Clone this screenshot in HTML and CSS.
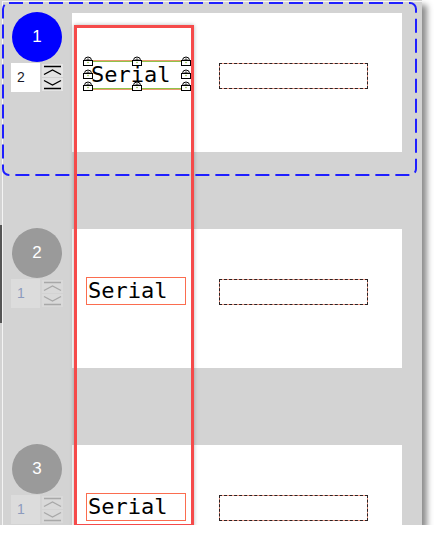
FILE: index.html
```html
<!DOCTYPE html>
<html lang="en">
<head>
    <meta charset="UTF-8">
    <title>Serial layout</title>
    <link rel="stylesheet" href="styles.css">
</head>
<body>
    <svg width="0" height="0" class="defs">
        <symbol id="lock" viewBox="0 0 12 12">
            <path d="M2.5 6.5 A3.5 3.5 0 0 1 9.5 6.5" fill="#fff" stroke="#000" stroke-width="1"/>
            <path d="M4.5 6.5 A1.5 1.5 0 0 1 7.5 6.5" fill="none" stroke="#000" stroke-width="0.8"/>
            <rect x="1.5" y="6.5" width="9" height="5" fill="#fff" stroke="#000" stroke-width="1"/>
            <circle cx="6" cy="8.5" r="0.8" fill="#8bbd3c"/>
        </symbol>
    </svg>

    <div class="frame">
        <div class="panel">
            <div class="inner">

                <div class="row">
                    <div class="side">
                        <div class="badge active">1</div>
                        <div class="spinner">
                            <div class="spin-value">2</div>
                            <div class="spin-buttons">
                                <div class="spin-btn">
                                    <svg width="21" height="13"><path d="M2 2.5 H19 M2 10.5 L10.5 6 L19 10.5" fill="none" stroke="currentColor" stroke-width="1.4"/></svg>
                                </div>
                                <div class="spin-btn">
                                    <svg width="21" height="13"><path d="M2 2.5 L10.5 7 L19 2.5 M2 10.5 H19" fill="none" stroke="currentColor" stroke-width="1.4"/></svg>
                                </div>
                            </div>
                        </div>
                    </div>
                    <div class="card">
                        <div class="field selected">
                            <span>Serial</span>
                            <svg class="handle h-tl"><use href="#lock"/></svg>
                            <svg class="handle h-tc"><use href="#lock"/></svg>
                            <svg class="handle h-tr"><use href="#lock"/></svg>
                            <svg class="handle h-ml"><use href="#lock"/></svg>
                            <svg class="handle h-mr"><use href="#lock"/></svg>
                            <svg class="handle h-bl"><use href="#lock"/></svg>
                            <svg class="handle h-bc"><use href="#lock"/></svg>
                            <svg class="handle h-br"><use href="#lock"/></svg>
                        </div>
                        <div class="slot"></div>
                    </div>
                </div>

                <div class="row">
                    <div class="side">
                        <div class="badge">2</div>
                        <div class="spinner disabled">
                            <div class="spin-value">1</div>
                            <div class="spin-buttons">
                                <div class="spin-btn">
                                    <svg width="21" height="13"><path d="M2 2.5 H19 M2 10.5 L10.5 6 L19 10.5" fill="none" stroke="currentColor" stroke-width="1.4"/></svg>
                                </div>
                                <div class="spin-btn">
                                    <svg width="21" height="13"><path d="M2 2.5 L10.5 7 L19 2.5 M2 10.5 H19" fill="none" stroke="currentColor" stroke-width="1.4"/></svg>
                                </div>
                            </div>
                        </div>
                    </div>
                    <div class="card">
                        <div class="field"><span>Serial</span></div>
                        <div class="slot"></div>
                    </div>
                </div>

                <div class="row">
                    <div class="side">
                        <div class="badge">3</div>
                        <div class="spinner disabled">
                            <div class="spin-value">1</div>
                            <div class="spin-buttons">
                                <div class="spin-btn">
                                    <svg width="21" height="13"><path d="M2 2.5 H19 M2 10.5 L10.5 6 L19 10.5" fill="none" stroke="currentColor" stroke-width="1.4"/></svg>
                                </div>
                                <div class="spin-btn">
                                    <svg width="21" height="13"><path d="M2 2.5 L10.5 7 L19 2.5 M2 10.5 H19" fill="none" stroke="currentColor" stroke-width="1.4"/></svg>
                                </div>
                            </div>
                        </div>
                    </div>
                    <div class="card">
                        <div class="field"><span>Serial</span></div>
                        <div class="slot"></div>
                    </div>
                </div>

            </div>
        </div>

        <!-- overlays -->
        <svg class="row-select" width="416" height="174">
            <rect x="1" y="1" width="413" height="172" rx="6" ry="6" fill="none" stroke="#1f1fff" stroke-width="2" stroke-dasharray="14 6"/>
        </svg>
        <div class="column-mark"></div>
        <div class="scroll-mark"></div>
    </div>
</body>
</html>
```

FILE: styles.css
```css
body {
    margin: 0;
    background-color: #ffffff;
    font-family: "Liberation Sans", Arial, sans-serif;
}

.defs {
    position: absolute;
}

.frame {
    position: relative;
    width: 422px;
    height: 525px;
}

.panel {
    width: 422px;
    height: 525px;
    background-color: #d3d3d3;
    box-shadow: 5px 5px 6px rgba(0, 0, 0, 0.45);
    overflow: hidden;
    box-sizing: border-box;
    padding: 1px 0 0 2px;
}

.inner {
    height: 100%;
    border-left: 1px solid #f4f4f4;
    border-top: 1px solid #f4f4f4;
    padding-top: 11px;
    box-sizing: border-box;
}

.row {
    display: flex;
    margin-bottom: 77px;
}

.side {
    width: 61px;
    flex-shrink: 0;
    padding-left: 8px;
    margin-top: -1px;
}

.badge {
    width: 50px;
    height: 50px;
    border-radius: 50%;
    background-color: #9a9a9a;
    color: #ffffff;
    font-size: 17px;
    display: flex;
    align-items: center;
    justify-content: center;
    margin-left: 1px;
}

.badge.active {
    background-color: #0000ff;
}

.spinner {
    display: flex;
    margin-top: 1px;
    height: 29px;
}

.spin-value {
    width: 23px;
    height: 29px;
    flex-shrink: 0;
    padding-left: 6px;
    background-color: #ffffff;
    font-size: 14px;
    line-height: 29px;
    color: #1a1a2a;
}

.spin-buttons {
    display: flex;
    flex-direction: column;
    justify-content: center;
    gap: 1px;
    margin-left: 2px;
    flex-shrink: 0;
}

.spin-btn {
    width: 21px;
    height: 13px;
    background-color: #e4e4e4;
    color: #000000;
}

.spin-btn svg {
    display: block;
}

.spinner.disabled .spin-value {
    background-color: #dcdcdc;
    color: #8d9bbd;
}

.spinner.disabled .spin-btn {
    background-color: #d9d9d9;
    color: #a8a8a8;
}

.card {
    width: 330px;
    height: 139px;
    flex-shrink: 0;
    background-color: #ffffff;
    display: flex;
    align-items: flex-start;
    padding: 48px 0 0 14px;
    box-sizing: border-box;
}

.field {
    position: relative;
    width: 100px;
    height: 28px;
    box-sizing: border-box;
    border: 1px solid #fb6d4f;
    font-family: "DejaVu Sans Mono", "Liberation Mono", monospace;
    font-size: 22px;
    line-height: 26px;
    padding-left: 1px;
    color: #000000;
}

.field.selected {
    border: none;
    border-top: 1px solid #8fc24a;
    border-bottom: 1px solid #8fc24a;
    box-shadow: 0 -1px 0 #e99a70, 0 1px 0 #e99a70;
    padding-left: 5px;
}

.handle {
    position: absolute;
    width: 12px;
    height: 12px;
}

.h-tl { left: -4px; top: -8px; }
.h-tc { left: 45px; top: -8px; }
.h-tr { left: 94px; top: -8px; }
.h-ml { left: -4px; top: 5px; }
.h-mr { left: 94px; top: 5px; }
.h-bl { left: -4px; top: 17px; }
.h-bc { left: 45px; top: 17px; }
.h-br { left: 94px; top: 17px; }

.slot {
    width: 149px;
    height: 26px;
    margin: 2px 0 0 33px;
    box-sizing: border-box;
    border: 1px dashed #2a2222;
    background: linear-gradient(#ffffff, #ffffff) padding-box, #f19a88 border-box;
}

.row-select {
    position: absolute;
    left: 2px;
    top: 2px;
}

.column-mark {
    position: absolute;
    left: 74px;
    top: 25px;
    width: 120px;
    height: 502px;
    box-sizing: border-box;
    border: 3px solid #f54a4a;
    box-shadow: 0 0 4px rgba(0, 0, 0, 0.3);
}

.scroll-mark {
    position: absolute;
    left: 0;
    top: 225px;
    width: 2px;
    height: 98px;
    background-color: #555555;
}
```
